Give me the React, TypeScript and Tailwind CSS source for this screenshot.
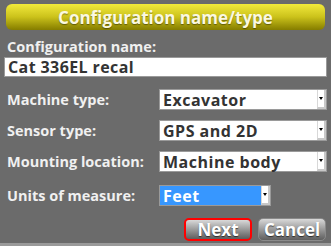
import React from "react";

const font = { fontFamily: '"Open Sans", "DejaVu Sans", sans-serif' };

function Select({ value, selected, wide = true }: { value: string; selected?: boolean; wide?: boolean }) {
  return (
    <div
      className={`flex h-[21px] items-stretch border border-[#9a9a9a] ${wide ? "w-[168px]" : "w-[112px]"} ${selected ? "bg-[#3797ff]" : "bg-white"}`}
    >
      <div className={`flex flex-1 items-center pl-[3px] text-[16px] font-bold leading-none tracking-[0.5px] ${selected ? "text-white" : "text-[#333]"}`}>
        {value}
      </div>
      <div className="flex w-[9px] items-center justify-center border-l border-[#d8d8d8] bg-white border-r-2 border-r-[#c8c8c8] border-b-2 border-b-[#c8c8c8]">
        <div className="h-0 w-0 border-x-[2px] border-t-[3px] border-x-transparent border-t-black" />
      </div>
    </div>
  );
}

function Row({ label, children, className = "" }: { label: string; children: React.ReactNode; className?: string }) {
  return (
    <div className={`flex h-[21px] items-center ${className}`}>
      <div className="w-[155px] pl-[3px] text-[14.5px] font-bold leading-[21px] text-[#f0f0f0]">{label}</div>
      {children}
    </div>
  );
}

export default function App() {
  return (
    <div className="flex h-[246px] w-[331px] flex-col overflow-hidden bg-[#6b6b6b]" style={font}>
      <div className="flex flex-1 flex-col px-[4px] pt-[4px]">
        <div className="mx-[2px] flex h-[26px] shrink-0 items-center justify-center rounded-[6px] bg-gradient-to-b from-[#f2ea3a] via-[#cbc21a] to-[#857d00] text-[17px] font-bold leading-none text-[#fbf8e0] [text-shadow:0_1px_1px_rgba(0,0,0,0.4)]">
          Configuration name/type
        </div>
        <div className="mt-[7px] h-[20px] shrink-0 pl-[3px] text-[14.5px] font-bold leading-[20px] text-[#f0f0f0]">Configuration name:</div>
        <div className="flex h-[20px] shrink-0 items-center border border-[#9a9a9a] bg-white pl-[3px] text-[16px] font-bold leading-none tracking-[0.4px] text-[#333]">
          Cat 336EL recal
        </div>
        <Row label="Machine type:" className="mt-[12px]">
          <Select value="Excavator" />
        </Row>
        <Row label="Sensor type:" className="mt-[10px]">
          <Select value="GPS and 2D" />
        </Row>
        <Row label="Mounting location:" className="mt-[10px]">
          <Select value="Machine body" />
        </Row>
        <Row label="Units of measure:" className="mt-[13px]">
          <Select value="Feet" selected wide={false} />
        </Row>
        <div className="mt-[12px] flex h-[23px] shrink-0 justify-end gap-[6px] pr-[1px]">
          <button className="flex h-[23px] w-[68px] items-center justify-center rounded-[5px] border-2 border-[#ff0000] bg-gradient-to-b from-[#d9d9d9] via-[#9a9a9a] to-[#5e5e5e] text-[17px] font-bold leading-none text-white [text-shadow:0_1px_1px_rgba(0,0,0,0.6)]">
            Next
          </button>
          <button className="flex h-[23px] w-[68px] items-center justify-center rounded-[5px] border border-[#8a8a8a] bg-gradient-to-b from-[#d9d9d9] via-[#9a9a9a] to-[#5e5e5e] text-[17px] font-bold leading-none text-white [text-shadow:0_1px_1px_rgba(0,0,0,0.6)]">
            Cancel
          </button>
        </div>
      </div>
      <div className="h-[3px] shrink-0 bg-[#9a9a9a]" />
    </div>
  );
}
